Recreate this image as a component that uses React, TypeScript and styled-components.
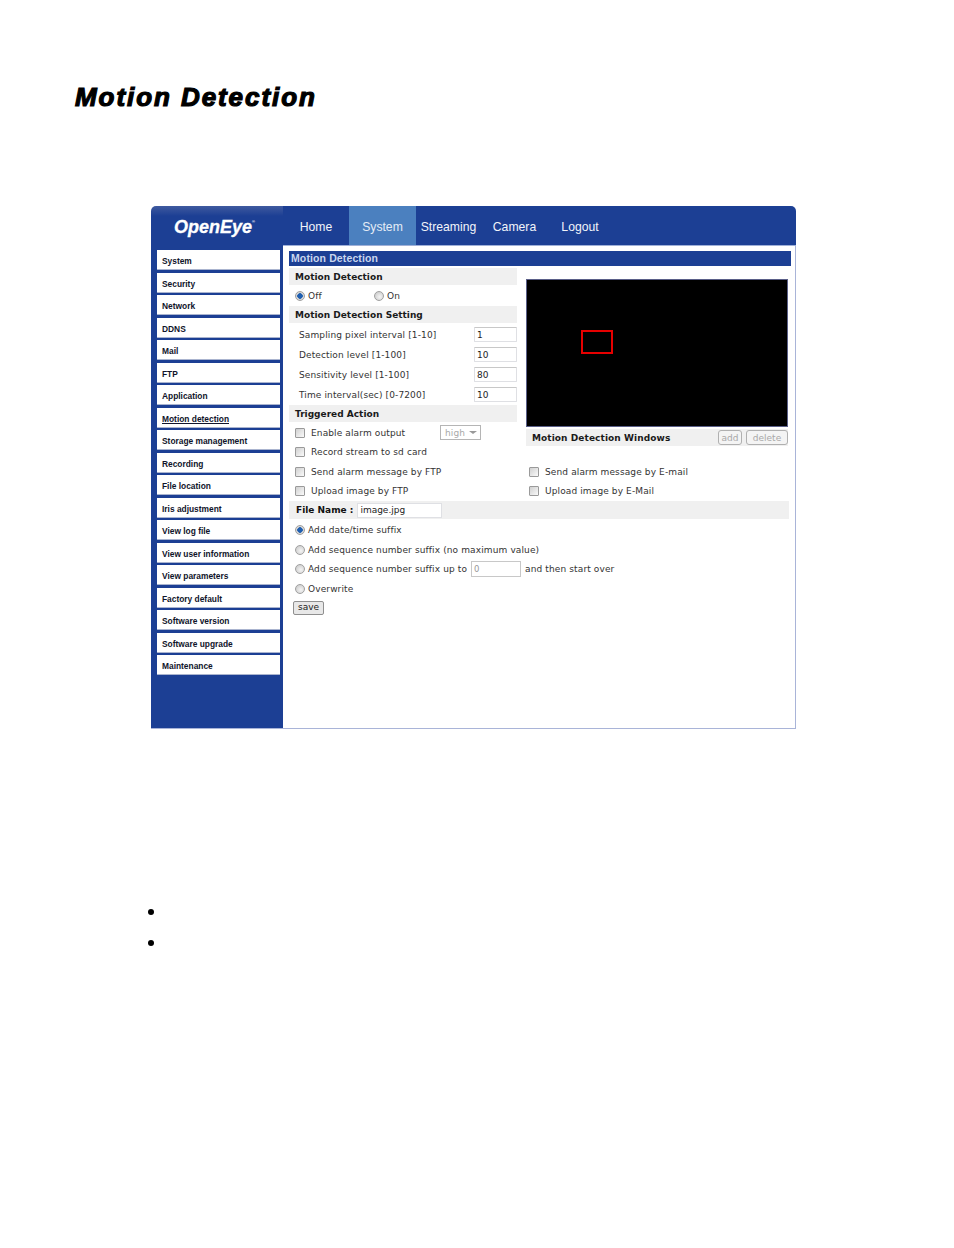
import React from 'react'
import styled, { createGlobalStyle } from 'styled-components'

const menuItems = [
  'System',
  'Security',
  'Network',
  'DDNS',
  'Mail',
  'FTP',
  'Application',
  'Motion detection',
  'Storage management',
  'Recording',
  'File location',
  'Iris adjustment',
  'View log file',
  'View user information',
  'View parameters',
  'Factory default',
  'Software version',
  'Software upgrade',
  'Maintenance'
]

const navItems = [
  { label: 'Home', width: 66 },
  { label: 'System', width: 67, active: true },
  { label: 'Streaming', width: 65 },
  { label: 'Camera', width: 67 },
  { label: 'Logout', width: 64 }
]

const settings = [
  { label: 'Sampling pixel interval [1-10]', value: '1' },
  { label: 'Detection level [1-100]', value: '10' },
  { label: 'Sensitivity level [1-100]', value: '80' },
  { label: 'Time interval(sec) [0-7200]', value: '10' }
]

export default function App() {
  return (
    <Page>
      <GlobalStyle />
      <Title>Motion Detection</Title>
      <Frame>
        <Sidebar>
          <Logo>
            OpenEye<LogoMark>®</LogoMark>
          </Logo>
          <Menu>
            {menuItems.map(item => (
              <MenuItem key={item} $current={item === 'Motion detection'}>
                {item}
              </MenuItem>
            ))}
          </Menu>
        </Sidebar>
        <Main>
          <Nav>
            {navItems.map(item => (
              <NavTab key={item.label} $width={item.width} $active={item.active}>
                {item.label}
              </NavTab>
            ))}
          </Nav>
          <Content>
            <PageHeading>Motion Detection</PageHeading>
            <Upper>
              <Settings>
                <SectionHead>Motion Detection</SectionHead>
                <OnOffRow>
                  <Choice>
                    <Radio name="motion" defaultChecked />
                    Off
                  </Choice>
                  <Choice>
                    <Radio name="motion" />
                    On
                  </Choice>
                </OnOffRow>
                <SectionHead>Motion Detection Setting</SectionHead>
                <SettingList>
                  {settings.map(setting => (
                    <SettingRow key={setting.label}>
                      <span>{setting.label}</span>
                      <NumberInput defaultValue={setting.value} />
                    </SettingRow>
                  ))}
                </SettingList>
                <SectionHead>Triggered Action</SectionHead>
                <CheckRow>
                  <AlarmLabel>
                    <Check />
                    Enable alarm output
                  </AlarmLabel>
                  <FakeSelect>
                    high
                    <Caret />
                  </FakeSelect>
                </CheckRow>
                <CheckRow>
                  <CheckLabel>
                    <Check />
                    Record stream to sd card
                  </CheckLabel>
                </CheckRow>
              </Settings>
              <Windows>
                <Video>
                  <DetectBox />
                </Video>
                <WindowsBar>
                  <WindowsTitle>Motion Detection Windows</WindowsTitle>
                  <SmallButton $width={24}>add</SmallButton>
                  <SmallButton $width={42}>delete</SmallButton>
                </WindowsBar>
              </Windows>
            </Upper>
            <PairRow>
              <CheckLabel>
                <Check />
                Send alarm message by FTP
              </CheckLabel>
              <CheckLabel>
                <Check />
                Send alarm message by E-mail
              </CheckLabel>
            </PairRow>
            <PairRow>
              <CheckLabel>
                <Check />
                Upload image by FTP
              </CheckLabel>
              <CheckLabel>
                <Check />
                Upload image by E-Mail
              </CheckLabel>
            </PairRow>
            <FileNameBar>
              <FileNameLabel>File Name :</FileNameLabel>
              <FileNameInput defaultValue="image.jpg" />
            </FileNameBar>
            <RadioList>
              <RadioRow>
                <Radio name="suffix" defaultChecked />
                Add date/time suffix
              </RadioRow>
              <RadioRow>
                <Radio name="suffix" />
                Add sequence number suffix (no maximum value)
              </RadioRow>
              <RadioRow>
                <Radio name="suffix" />
                Add sequence number suffix up to
                <SuffixInput defaultValue="0" />
                and then start over
              </RadioRow>
              <RadioRow>
                <Radio name="suffix" />
                Overwrite
              </RadioRow>
            </RadioList>
            <SaveButton>save</SaveButton>
          </Content>
        </Main>
      </Frame>
      <Bullets>
        <BulletRow />
        <BulletRow />
      </Bullets>
    </Page>
  )
}

const GlobalStyle = createGlobalStyle`
  html, body {
    margin: 0;
    background: #fff;
  }
  body {
    font-family: "DejaVu Sans", sans-serif;
  }
`

const Page = styled.div`
  width: 954px;
  height: 1248px;
  padding: 82px 0 0 75px;
  box-sizing: border-box;
  overflow: hidden;
`

const Title = styled.h1`
  margin: 0;
  font-family: "Liberation Sans", sans-serif;
  font-size: 26px;
  line-height: 31px;
  font-weight: 700;
  font-style: italic;
  letter-spacing: 1.93px;
  color: #000;
  -webkit-text-stroke: 1.2px #000;
`

const Frame = styled.div`
  display: flex;
  width: 645px;
  height: 523px;
  margin: 93px 0 0 76px;
  border-radius: 5px 5px 0 0;
  overflow: hidden;
`

const Sidebar = styled.div`
  flex: 0 0 132px;
  background: linear-gradient(#3f5a9f 0, #1c3f94 10px);
  border-bottom: 1px solid #a9b4d8;
  box-sizing: border-box;
`

const Logo = styled.div`
  height: 44px;
  padding: 9px 0 0 23px;
  box-sizing: border-box;
  font-family: "Liberation Sans", sans-serif;
  font-size: 18px;
  line-height: 25px;
  font-weight: 700;
  font-style: italic;
  color: #fff;
  -webkit-text-stroke: 0.3px #fff;
`

const LogoMark = styled.sup`
  font-size: 4px;
  font-style: normal;
  vertical-align: 10px;
  line-height: 0;
  -webkit-text-stroke: 0;
`

const Menu = styled.div`
  display: flex;
  flex-direction: column;
  gap: 2.5px;
  margin-left: 6px;
  width: 123px;
`

const MenuItem = styled.div<{ $current?: boolean }>`
  height: 20px;
  padding: 5px 0 0 5px;
  box-sizing: border-box;
  background: #fff;
  border-bottom: 1px solid #aab4cf;
  font-family: "Liberation Sans", sans-serif;
  font-size: 8.4px;
  line-height: 12px;
  font-weight: 700;
  color: #10142a;
  text-decoration: ${props => (props.$current ? 'underline' : 'none')};
`

const Main = styled.div`
  flex: 1;
  display: flex;
  flex-direction: column;
  min-width: 0;
`

const Nav = styled.div`
  display: flex;
  flex: 0 0 39px;
  background: #1c3f94;
  border-bottom: 1px solid #9fb0d8;
`

const NavTab = styled.div<{ $width: number; $active?: boolean }>`
  width: ${props => props.$width}px;
  height: 39px;
  padding-top: 2px;
  box-sizing: border-box;
  background: ${props => (props.$active ? '#4b80bf' : 'transparent')};
  font-family: "Liberation Sans", sans-serif;
  font-size: 12.2px;
  line-height: 39px;
  text-align: center;
  color: ${props => (props.$active ? '#e4ecf6' : '#f2f4fa')};
`

const Content = styled.div`
  flex: 1;
  padding: 5px 4px 0 6px;
  border-right: 1px solid #a9b4d8;
  border-bottom: 1px solid #a9b4d8;
  font-size: 9px;
  letter-spacing: 0.12px;
  color: #333;
`

const PageHeading = styled.div`
  height: 15px;
  padding-left: 2px;
  background: #1c3f94;
  font-family: "Liberation Sans", sans-serif;
  font-size: 10.5px;
  line-height: 15px;
  font-weight: 700;
  color: #c9d6ee;
`

const Upper = styled.div`
  display: grid;
  grid-template-columns: 228px 262px;
  column-gap: 9px;
  margin-top: 2px;
`

const Settings = styled.div`
  display: flex;
  flex-direction: column;
`

const SectionHead = styled.div`
  height: 17px;
  padding-left: 6px;
  background: #f0f0f0;
  font-size: 9px;
  line-height: 19px;
  font-weight: 700;
  letter-spacing: 0;
  color: #1a1a1a;
`

const OnOffRow = styled.div`
  display: flex;
  height: 21px;
  padding-left: 6px;
  align-items: center;
`

const Choice = styled.label`
  display: flex;
  align-items: center;
  gap: 3px;
  width: 79px;
  line-height: 12px;
`

const Radio = styled.input.attrs({ type: 'radio' })`
  appearance: none;
  flex: none;
  width: 10px;
  height: 10px;
  margin: 0;
  border-radius: 50%;
  border: 1px solid #a0a0a0;
  background: radial-gradient(circle at 60% 60%, #f4f4f4, #c4c4c4);

  &:checked {
    background: radial-gradient(circle, #1f5fb0 0 2.5px, #d8d8d8 3px);
  }
`

const SettingList = styled.div`
  display: flex;
  flex-direction: column;
  padding: 2px 0 0 10px;
`

const SettingRow = styled.div`
  display: flex;
  height: 20px;
  align-items: center;
  justify-content: space-between;
`

const NumberInput = styled.input`
  width: 43px;
  height: 15px;
  margin-bottom: 1px;
  padding: 0 0 0 2px;
  box-sizing: border-box;
  border: 1px solid #dfe0e4;
  border-top-color: #c8c8c8;
  border-radius: 1px;
  outline: none;
  font-family: inherit;
  font-size: 9px;
  color: #222;
`

const CheckRow = styled.div`
  display: flex;
  height: 19.5px;
  align-items: center;
  padding-left: 6px;

  ${SectionHead} + & {
    margin-top: 1px;
  }
`

const CheckLabel = styled.label`
  display: flex;
  align-items: center;
  gap: 6px;
`

const AlarmLabel = styled(CheckLabel)`
  width: 145px;
`

const Check = styled.input.attrs({ type: 'checkbox' })`
  appearance: none;
  flex: none;
  width: 10px;
  height: 10px;
  margin: 0;
  border: 1px solid #9a9a9a;
  border-radius: 1px;
  background: linear-gradient(135deg, #d0d0d0, #fafafa);
`

const FakeSelect = styled.div`
  display: flex;
  align-items: center;
  justify-content: space-between;
  width: 41px;
  height: 15px;
  padding: 0 3px 0 4px;
  box-sizing: border-box;
  border: 1px solid #b5b5b5;
  font-size: 9px;
  color: #a8a8a8;
`

const Caret = styled.span`
  width: 0;
  height: 0;
  border-left: 4px solid transparent;
  border-right: 4px solid transparent;
  border-top: 3px solid #999;
`

const Windows = styled.div`
  display: flex;
  flex-direction: column;
  padding-top: 11px;
`

const Video = styled.div`
  height: 148px;
  padding: 50px 0 0 54px;
  box-sizing: border-box;
  background: #000;
  border: 1px solid #5a5f88;
`

const DetectBox = styled.div`
  width: 32px;
  height: 24px;
  box-sizing: border-box;
  border: 2px solid #e60000;
`

const WindowsBar = styled.div`
  display: flex;
  align-items: center;
  gap: 4px;
  height: 17px;
  margin-top: 2px;
  padding-left: 6px;
  background: #f0f0f0;
`

const WindowsTitle = styled.span`
  flex: 1;
  padding-top: 1px;
  font-size: 9px;
  font-weight: 700;
  letter-spacing: 0.08px;
  color: #1a1a1a;
`

const SmallButton = styled.button<{ $width: number }>`
  width: ${props => props.$width}px;
  height: 15px;
  padding: 0;
  border: 1px solid #b0b0b0;
  border-radius: 3px;
  background: #f4f4f4;
  font-family: inherit;
  font-size: 9px;
  color: #a8a8a8;
`

const PairRow = styled.div`
  display: grid;
  grid-template-columns: 234px 1fr;
  height: 19.5px;
  align-items: center;
  padding-left: 6px;
`

const FileNameBar = styled.div`
  display: flex;
  align-items: center;
  gap: 4px;
  width: 500px;
  height: 18px;
  padding-left: 7px;
  box-sizing: border-box;
  background: #f0f0f0;
`

const FileNameLabel = styled.span`
  font-size: 9px;
  font-weight: 700;
  letter-spacing: 0;
  color: #111;
`

const FileNameInput = styled.input`
  width: 85px;
  height: 15px;
  padding: 0 0 0 2px;
  box-sizing: border-box;
  border: 1px solid #dfe0e4;
  outline: none;
  font-family: inherit;
  font-size: 9px;
  color: #222;
`

const RadioList = styled.div`
  display: flex;
  flex-direction: column;
  padding: 1.5px 0 0 6px;
`

const RadioRow = styled.label`
  display: flex;
  align-items: center;
  gap: 3px;
  height: 19.6px;
`

const SuffixInput = styled.input`
  width: 50px;
  height: 16px;
  margin: 0 1px;
  padding: 0 0 0 2px;
  box-sizing: border-box;
  border: 1px solid #c8c8c8;
  outline: none;
  font-family: inherit;
  font-size: 8.5px;
  color: #999;
`

const SaveButton = styled.button`
  display: block;
  height: 14px;
  margin: 2px 0 0 4px;
  padding: 0 4px;
  border: 1px solid #8f8f8f;
  border-radius: 2px;
  background: #e8e8e8;
  font-family: inherit;
  font-size: 9px;
  line-height: 11px;
  color: #222;
`

const Bullets = styled.div`
  display: flex;
  flex-direction: column;
  gap: 25px;
  margin: 180px 0 0 73px;
`

const BulletRow = styled.div`
  width: 6px;
  height: 6px;
  border-radius: 50%;
  background: #000;
`
